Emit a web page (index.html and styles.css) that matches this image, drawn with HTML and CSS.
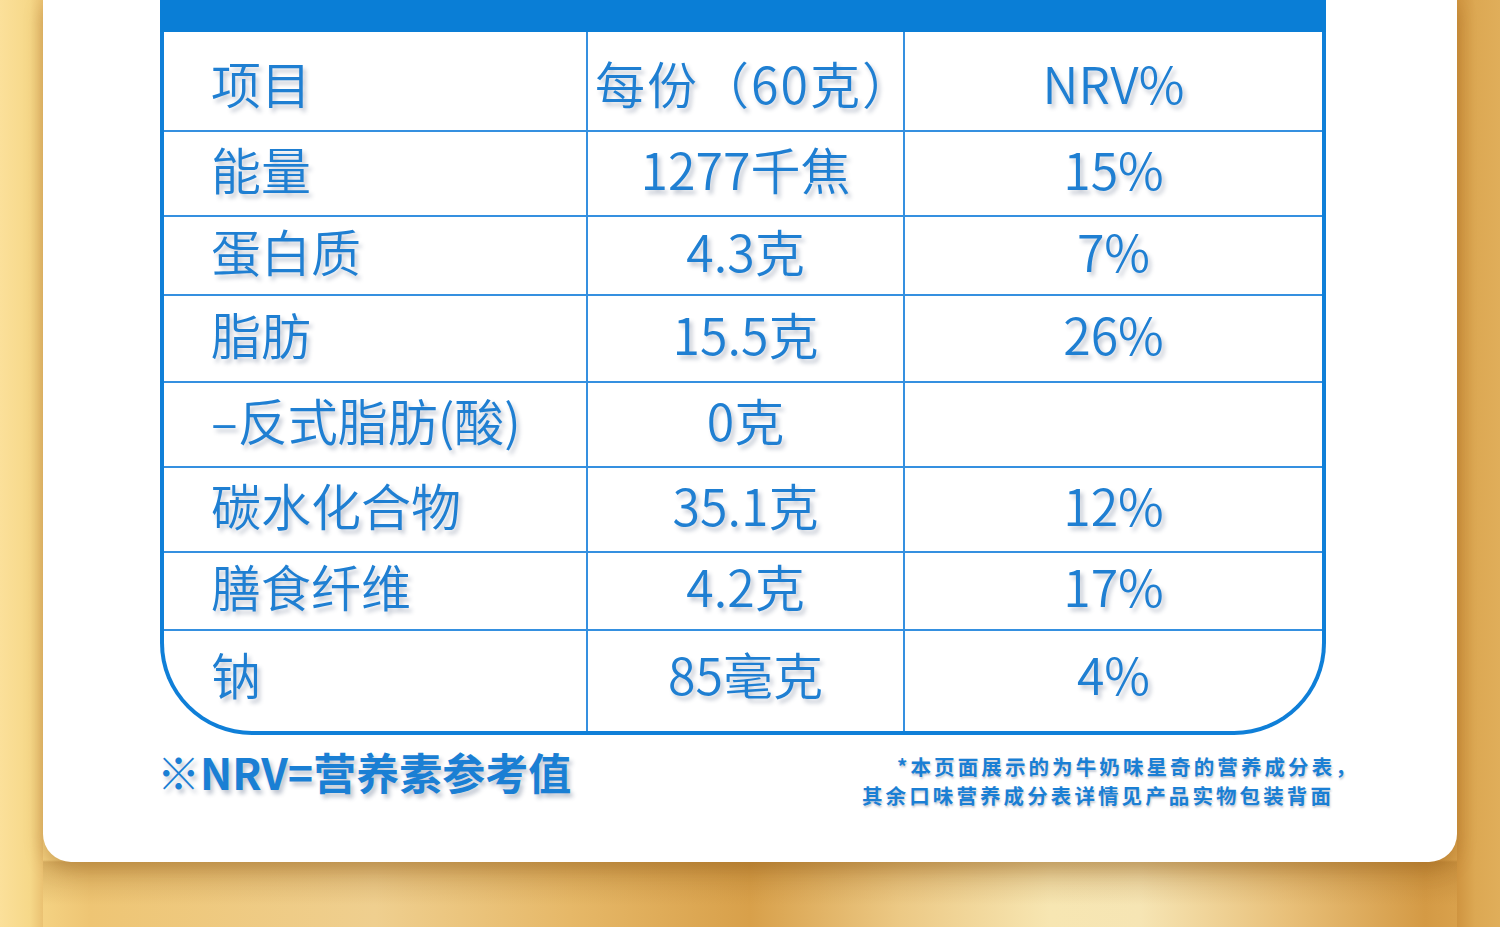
FILE: index.html
```html
<!DOCTYPE html>
<html lang="zh-CN">
<head>
<meta charset="utf-8">
<title>营养成分表</title>
<link rel="stylesheet" href="styles.css">
</head>
<body>
<div class="page">
  <div class="card">
    <div class="topbar"></div>
    <div class="table">
      <div class="row head">
        <div class="cell c1">项目</div>
        <div class="cell c2 wide">每份（60克）</div>
        <div class="cell c3">NRV%</div>
      </div>
      <div class="row r2">
        <div class="cell c1">能量</div>
        <div class="cell c2">1277千焦</div>
        <div class="cell c3">15%</div>
      </div>
      <div class="row r3">
        <div class="cell c1">蛋白质</div>
        <div class="cell c2">4.3克</div>
        <div class="cell c3">7%</div>
      </div>
      <div class="row r4">
        <div class="cell c1">脂肪</div>
        <div class="cell c2">15.5克</div>
        <div class="cell c3">26%</div>
      </div>
      <div class="row r5">
        <div class="cell c1">–反式脂肪(酸)</div>
        <div class="cell c2">0克</div>
        <div class="cell c3"></div>
      </div>
      <div class="row r6">
        <div class="cell c1">碳水化合物</div>
        <div class="cell c2">35.1克</div>
        <div class="cell c3">12%</div>
      </div>
      <div class="row r7">
        <div class="cell c1">膳食纤维</div>
        <div class="cell c2">4.2克</div>
        <div class="cell c3">17%</div>
      </div>
      <div class="row r8 last">
        <div class="cell c1">钠</div>
        <div class="cell c2">85毫克</div>
        <div class="cell c3">4%</div>
      </div>
    </div>
    <div class="notes">
      <div class="nrv">※NRV=营养素参考值</div>
      <div class="fine">
        <div class="fine-l1">*本页面展示的为牛奶味星奇的营养成分表，</div>
        <div class="fine-l2">其余口味营养成分表详情见产品实物包装背面</div>
      </div>
    </div>
  </div>
</div>
</body>
</html>
```
FILE: styles.css
```css
html, body {
  margin: 0;
  padding: 0;
}
body {
  width: 1500px;
  height: 927px;
  overflow: hidden;
  font-family: "Noto Sans CJK SC", "Noto Sans", sans-serif;
  background:
    linear-gradient(90deg,
      #fbe09a 0px, #f6d889 30px, #eac172 43px,
      rgba(0,0,0,0) 43px, rgba(0,0,0,0) 1457px,
      #cf9440 1457px, #dca853 1475px, #e0ae5a 1500px),
    linear-gradient(180deg,
      rgba(150, 95, 25, 0) 0px, rgba(150, 95, 25, 0) 860px,
      rgba(150, 95, 25, 0.28) 862px, rgba(150, 95, 25, 0) 905px),
    linear-gradient(90deg,
      #fadd8f 0%, #eec574 6%, #efcf8f 25%, #e6b868 38%,
      #d8a04a 50%, #ecc985 60%, #f7e6b2 70%, #f6e5b4 76%,
      #e8bf78 86%, #d49a45 95%, #dfaa55 100%);
}
.page {
  width: 1500px;
  height: 927px;
}
.card {
  box-sizing: border-box;
  margin-left: 43px;
  width: 1414px;
  height: 862px;
  background: #ffffff;
  border-radius: 0 0 28px 28px;
  box-shadow: 0 8px 18px rgba(140, 85, 20, 0.35);
  padding-left: 117px;
}
.topbar {
  width: 1166px;
  height: 32px;
  background: #0a7ed6;
}
.table {
  box-sizing: border-box;
  width: 1166px;
  border: 4px solid #0f7fd8;
  border-top: none;
  border-radius: 0 0 92px 92px;
  overflow: hidden;
}
.row {
  box-sizing: border-box;
  display: grid;
  grid-template-columns: 424px 317px 1fr;
  border-bottom: 2px solid #3590e0;
}
.row.last {
  border-bottom: none;
}
.head { height: 100px; }
.r2 { height: 85px; }
.r3 { height: 79px; }
.r4 { height: 87px; }
.r5 { height: 85px; }
.r6 { height: 85px; }
.r7 { height: 78px; }
.r8 { height: 100px; }
.cell {
  box-sizing: border-box;
  display: flex;
  align-items: center;
  font-size: 50px;
  font-weight: 350;
  line-height: 1;
  color: #1f7fd2;
  text-shadow: 3px 4px 4px rgba(30, 50, 90, 0.26);
  white-space: nowrap;
  padding-bottom: 12px;
}
.c1 {
  padding-left: 47px;
  border-right: 2px solid #3590e0;
}
.c2 {
  justify-content: center;
  border-right: 2px solid #3590e0;
}
.c3 {
  justify-content: center;
}
.wide {
  letter-spacing: 2px;
  padding-left: 18px;
}
.head .cell { padding-bottom: 0; padding-top: 2px; }
.r8 .cell { padding-bottom: 16px; }
.notes {
  display: flex;
  align-items: flex-start;
  width: 1230px;
  margin-top: 12px;
}
.nrv {
  font-size: 43px;
  line-height: 48px;
  font-weight: 700;
  color: #1a7fd4;
  text-shadow: 3px 4px 4px rgba(30, 50, 90, 0.28);
  white-space: nowrap;
  margin-left: -3px;
}
.fine {
  margin-left: auto;
  width: 528px;
  margin-top: 5px;
  font-size: 20.5px;
  line-height: 29px;
  font-weight: 700;
  color: #1a7fd4;
  letter-spacing: 3.1px;
  text-shadow: 1px 2px 2px rgba(30, 50, 90, 0.25);
  white-space: nowrap;
}
.fine-l1 {
  padding-left: 35px;
}
```
